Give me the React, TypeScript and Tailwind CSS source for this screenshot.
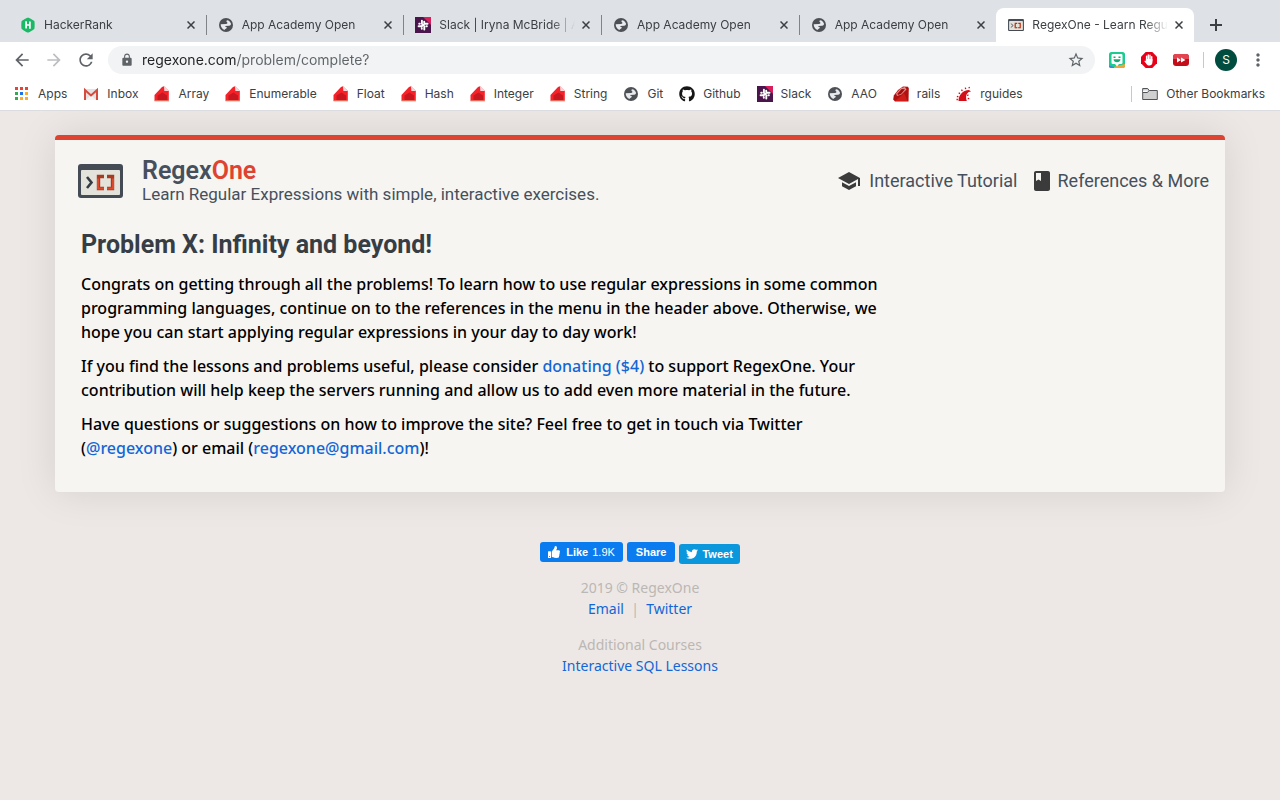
import type { ReactNode } from 'react';
import { FaGithub, FaThumbsUp, FaTwitter } from 'react-icons/fa';
import { MdArrowBack, MdArrowForward, MdClass, MdLock, MdMoreVert, MdRefresh, MdSchool, MdStarBorder } from 'react-icons/md';

function Globe() {
  return (
    <svg viewBox="0 0 16 16" className="size-4 shrink-0" aria-hidden="true">
      <circle cx="8" cy="8" r="7" fill="#4d5156" />
      <path d="M9.500 3.200C8.400 3.600 8 4.400 8.800 5 9.900 5.700 9.500 7 8 7L2.700 7.200C2.600 9.500 4 11.800 6.400 12.900 7 11.800 8.800 11.800 8.800 10.500 8.800 9.600 7 9.800 7 9L11 8.700C12.600 8.500 13.100 7.600 13 6.800 12.600 5.200 11.500 3.800 9.500 3.200Z" fill="#e8eaed" />
    </svg>
  );
}

function HackerRankIcon() {
  return (
    <svg viewBox="0 0 16 16" className="size-4 shrink-0" aria-hidden="true">
      <path d="M8 .4c.7 0 5.800 2.900 6.300 3.600.5.700.5 7.300 0 8-.5.700-5.600 3.600-6.300 3.600S2.200 12.700 1.700 12c-.5-.7-.5-7.300 0-8C2.200 3.300 7.300.4 8 .4Z" fill="#1bb866" />
      <path d="M6.100 4.200v7.200M9.900 4.600v7.200M6.100 8h3.800" stroke="#fff" strokeWidth="1.700" />
    </svg>
  );
}

function SlackIcon() {
  return (
    <svg viewBox="0 0 16 16" className="size-4 shrink-0" aria-hidden="true">
      <path d="M0 0h16v16H0z" fill="#4a154b" />
      <path d="M8 0h8v8Z" fill="#d81e5b" />
      <path d="M6.900 3.600v3.200M9.300 6.700h3.300M9.300 9.300v3.300M3.600 9.300h3.300M9.200 4.600v1M11.400 9.300h.5M6.800 11.300v.5M4.200 6.700h.6M6.500 9.300l3-2.500" stroke="#fff" strokeWidth="1.900" strokeLinecap="round" />
    </svg>
  );
}

function RubyDocIcon() {
  return (
    <svg viewBox="0 0 16 16" className="size-4 shrink-0" aria-hidden="true">
      <path d="M.5 15V9L8 1l2-.8 4.800 4.800V15Z" fill="#f5222a" />
      <path d="M3.500 14V9.500L8.500 6.500l4.500 3V14Z" fill="#c9171f" />
      <path d="M10 .2l.300 4.800h4.700Z" fill="#f8d5d7" />
      <path d="M.5 14.500h14.500v1H.5Z" fill="#d9b48d" />
    </svg>
  );
}

function TerminalIcon({ className }: { className: string }) {
  return (
    <svg viewBox="0 0 45 34" className={className} aria-hidden="true">
      <rect width="45" height="34" rx="3" fill="#444b55" />
      <rect x="3" y="6" width="39" height="25" rx="1" fill="#e4e3db" />
      <path d="M9 13l4.500 5.500L9 24" fill="none" stroke="#343b43" strokeWidth="2.600" />
      <path d="M26 12.500h-5.500v12H26M29 12.500h5.500v12H29" fill="none" stroke="#a93a22" strokeWidth="3.400" />
      <path d="M20 14.500v10h6M35 14.500v10h-6" fill="none" stroke="#dd4a2b" strokeWidth="2" />
    </svg>
  );
}

function AppsIcon() {
  const colors = ['#ea4335', '#ea4335', '#ea4335', '#34a853', '#1a73e8', '#fbac2d', '#34a853', '#fbac2d', '#fbac2d'];
  return (
    <svg viewBox="0 0 16 16" className="size-4 shrink-0" aria-hidden="true">
      {colors.map((c, i) => (
        <rect key={i} x={1 + (i % 3) * 5} y={1 + Math.floor(i / 3) * 5} width="3" height="3" fill={c} />
      ))}
    </svg>
  );
}

function GmailIcon() {
  return (
    <svg viewBox="0 0 16 16" className="size-4 shrink-0" aria-hidden="true">
      <path d="M1 3h14v11H1z" fill="#e3e3e3" />
      <path d="M3 14 8 9l5 5Z" fill="#f5f5f5" />
      <path d="M2 14V4l6 5.500L14 4v10" fill="none" stroke="#d54b3d" strokeWidth="2" />
    </svg>
  );
}

function RubyGemIcon() {
  return (
    <svg viewBox="0 0 16 16" className="size-4 shrink-0" aria-hidden="true">
      <path d="M10 .5 15 .8 15.800 2.500 15.500 15.500 2 15.500.2 13.500.8 9.500 5 4Z" fill="#b01010" />
      <path d="M3 7.500 8 2l4-1 1.500 2.500-5 5L4 10Z" fill="#e58a86" />
      <path d="M4.300 7.700 8.700 3l3.300.2-3.800 4.500L5 9Z" fill="#a00b0b" />
      <path d="M2 15 8 10l3-3 3.500 8Z" fill="#cf1c18" />
    </svg>
  );
}

function RailsIcon() {
  return (
    <svg viewBox="0 0 16 16" className="size-4 shrink-0" aria-hidden="true">
      <path d="M2.500 15c.2-6 4-10.500 10.500-11l2 1.500C11 6 9 9 10.800 15Z" fill="#d30c15" />
      <path d="M.5 13.500h1.400M.9 10.300l1.500.5M2.700 6.800l1.300 1M5.500 3.700l.8 1.300M9.300 1.600l.4 1.500M13 1l.4 1.200M11 9.500l1.500-.6M11.700 12.500l1.600.2" stroke="#d30c15" strokeWidth="1.300" />
    </svg>
  );
}

function FolderIcon() {
  return (
    <svg viewBox="0 0 16 16" className="size-4 shrink-0" aria-hidden="true">
      <path d="M.7 13.500v-11h5l1.500 2h8.100v9Z" fill="#d0d0d0" stroke="#505357" />
      <path d="M1 4.500h5.500l-1 2H1Z" fill="#fff" />
      <path d="M1 6.500h4.500l1.500-2" fill="none" stroke="#505357" />
    </svg>
  );
}

function BitmojiIcon() {
  return (
    <svg viewBox="0 0 16 16" className="size-4" aria-hidden="true">
      <rect width="16" height="16" rx="2.500" fill="#1bcb90" />
      <path d="M6 14.500 16 12v2a2 2 0 0 1-2 2H4Z" fill="#f2a33a" />
      <path d="M0 13.500 5 15v1H2a2 2 0 0 1-2-2Z" fill="#3a86e0" />
      <path d="M3.800 2h8.400A1.300 1.300 0 0 1 13.500 3.300V10.700a1.300 1.300 0 0 1-1.300 1.300H10L8 14.500l-2-2.500H3.800A1.300 1.300 0 0 1 2.500 10.700V3.300A1.300 1.300 0 0 1 3.800 2Z" fill="#fff" />
      <path d="M4.500 5.300h2M9.500 5.300h2" stroke="#1aa777" strokeWidth="1.500" />
      <path d="M4.500 7.200h7c0 4-7 4-7 0Z" fill="#1aa777" />
    </svg>
  );
}

function BlockerIcon() {
  return (
    <svg viewBox="0 0 16 16" className="size-4" aria-hidden="true">
      <path d="M4.700 0h6.600L16 4.700v6.600L11.300 16H4.700L0 11.300V4.700Z" fill="#e60019" />
      <path d="M5.600 9V4.200M7.300 8V2.900M9 8V3.200M10.700 9V4.700" stroke="#fff" strokeWidth="1.400" strokeLinecap="round" />
      <path d="M4.900 7h6.500v3.500C11.400 12.500 10 13.500 8.500 13.500 7 13.500 6.200 13 5.500 12L3.300 9.200c.6-.7 1.200-.5 1.600 0Z" fill="#fff" />
    </svg>
  );
}

function SkipIcon() {
  return (
    <svg viewBox="0 0 16 16" className="size-4" aria-hidden="true">
      <rect y="2" width="16" height="12" rx="3" fill="#c40d1a" />
      <path d="M0 7V5a3 3 0 0 1 3-3h10a3 3 0 0 1 3 3v2Z" fill="#e24550" />
      <path d="M4 5.500 8 8 4 10.500ZM8 5.500 12.500 8 8 10.500Z" fill="#fff" />
    </svg>
  );
}

function Cross() {
  return (
    <svg viewBox="0 0 8 8" className="size-2" aria-hidden="true">
      <path d="M.5.5l7 7M7.500.5l-7 7" stroke="#3c4043" strokeWidth="1.500" />
    </svg>
  );
}

const tabs: { title: string; icon: ReactNode }[] = [
  { title: 'HackerRank', icon: <HackerRankIcon /> },
  { title: 'App Academy Open', icon: <Globe /> },
  { title: 'Slack | Iryna McBride | A', icon: <SlackIcon /> },
  { title: 'App Academy Open', icon: <Globe /> },
  { title: 'App Academy Open', icon: <Globe /> },
  { title: 'RegexOne - Learn Regu', icon: <TerminalIcon className="h-3 w-4 shrink-0" /> },
];

const bookmarks: { title: string; icon: ReactNode }[] = [
  { title: 'Apps', icon: <AppsIcon /> },
  { title: 'Inbox', icon: <GmailIcon /> },
  { title: 'Array', icon: <RubyDocIcon /> },
  { title: 'Enumerable', icon: <RubyDocIcon /> },
  { title: 'Float', icon: <RubyDocIcon /> },
  { title: 'Hash', icon: <RubyDocIcon /> },
  { title: 'Integer', icon: <RubyDocIcon /> },
  { title: 'String', icon: <RubyDocIcon /> },
  { title: 'Git', icon: <Globe /> },
  { title: 'Github', icon: <FaGithub className="size-4 text-[#161614]" /> },
  { title: 'Slack', icon: <SlackIcon /> },
  { title: 'AAO', icon: <Globe /> },
  { title: 'rails', icon: <RubyGemIcon /> },
  { title: 'rguides', icon: <RailsIcon /> },
];

function TabStrip() {
  return (
    <div className="flex h-[42px] items-end bg-[#dee1e6] pl-2">
      <div className="flex h-[34px] max-w-[1186px] flex-1">
        {tabs.map((tab, i) => {
          const active = i === tabs.length - 1;
          const separated = i < tabs.length - 2;
          return (
            <div key={i} className={`flex min-w-0 flex-1 items-center rounded-t-lg pl-3 ${active ? 'bg-white' : ''}`}>
              {tab.icon}
              <button className="ml-2 min-w-0 flex-1 overflow-hidden text-left whitespace-nowrap [mask-image:linear-gradient(to_right,black_112px,transparent_136px)]">
                {tab.title}
              </button>
              <button aria-label="Close tab" className="mr-[11px] ml-1 p-0">
                <Cross />
              </button>
              <span className={`-mr-px h-5 w-px ${separated ? 'bg-[#808488]' : ''}`} />
            </div>
          );
        })}
      </div>
      <button aria-label="New tab" className="mr-auto mb-[11px] ml-4">
        <svg viewBox="0 0 12 12" className="size-3" aria-hidden="true">
          <path d="M6 0v12M0 6h12" stroke="#3c4043" strokeWidth="2" />
        </svg>
      </button>
    </div>
  );
}

function Toolbar() {
  return (
    <div className="flex h-9 items-center pr-3 pl-3">
      <button aria-label="Back" className="text-[#5f6368]"><MdArrowBack className="size-5" /></button>
      <button aria-label="Forward" className="ml-3 text-[#bcbec1]"><MdArrowForward className="size-5" /></button>
      <button aria-label="Reload" className="ml-3 text-[#5f6368]"><MdRefresh className="size-5" /></button>
      <div className="ml-3 flex h-7 flex-1 items-center rounded-full bg-[#f1f3f4] pr-2.5 pl-3">
        <MdLock className="size-3.5 text-[#5f6368]" />
        <input
          aria-label="Address"
          defaultValue="regexone.com/problem/complete?"
          className="ml-2 min-w-0 flex-1 bg-transparent bg-[linear-gradient(to_right,#202124_94px,#5f6368_94px)] bg-clip-text text-sm leading-6 text-transparent outline-none"
        />
        <button aria-label="Bookmark this page" className="text-[#5f6368]"><MdStarBorder className="size-4.5" /></button>
      </div>
      <div className="ml-3.5 flex items-center gap-4">
        <button aria-label="Bitmoji"><BitmojiIcon /></button>
        <button aria-label="Ad blocker"><BlockerIcon /></button>
        <button aria-label="Skip ads"><SkipIcon /></button>
      </div>
      <span className="ml-3.5 h-4 w-px bg-[#c6c8cb]" />
      <button aria-label="Profile" className="ml-[11px] size-[22px] rounded-full bg-[#004d40] text-xs text-white">S</button>
      <button aria-label="Menu" className="ml-[11px] text-[#5f6368]"><MdMoreVert className="size-5" /></button>
    </div>
  );
}

function BookmarksBar() {
  return (
    <nav aria-label="Bookmarks" className="flex h-[33px] items-center border-b border-[#dadce0] pr-[15px] pl-3.5">
      <div className="flex items-center gap-4">
        {bookmarks.map((b) => (
          <a key={b.title} href="#" className="flex items-center gap-2">
            {b.icon}
            {b.title}
          </a>
        ))}
      </div>
      <span className="ml-auto h-4 w-px bg-[#c6c8cb]" />
      <a href="#" className="ml-2.5 flex items-center gap-2">
        <FolderIcon />
        Other Bookmarks
      </a>
    </nav>
  );
}

function SiteHeader() {
  return (
    <header className="flex items-center pt-[18px] pr-4 pl-[23px] font-['Roboto',sans-serif] font-normal text-[#46505c]">
      <TerminalIcon className="h-[34px] w-[45px]" />
      <div className="ml-[19px]">
        <div className="text-[25px] leading-[26px] font-semibold">
          Regex<span className="text-[#dd4330]">One</span>
        </div>
        <div className="text-[17px] leading-5">Learn Regular Expressions with simple, interactive exercises.</div>
      </div>
      <nav aria-label="Site" className="ml-auto flex gap-3 text-lg leading-6">
        <a href="#" className="flex items-center gap-2">
          <MdSchool className="size-6 text-[#3b3b3b]" />
          Interactive Tutorial
        </a>
        <a href="#" className="flex items-center gap-1">
          <MdClass className="size-6 text-[#3b3b3b]" />
          References &amp; More
        </a>
      </nav>
    </header>
  );
}

function Link({ children }: { children: ReactNode }) {
  return <a href="#" className="text-[#1266d6]">{children}</a>;
}

export default function App() {
  return (
    <div className="flex min-h-screen flex-col bg-[#ede8e5] font-['Noto_Sans',sans-serif]">
      <div className="bg-white font-['Inter',sans-serif] text-xs text-[#3c4043]">
        <TabStrip />
        <Toolbar />
        <BookmarksBar />
      </div>

      <div className="flex-1 overflow-hidden px-4 pt-6 pb-8">
        <main className="mx-auto max-w-[1170px] rounded-sm border-t-5 border-[#dd4330] bg-[#f6f5f1] pb-8 shadow-[0_0_40px_rgba(0,0,0,0.1)]">
          <SiteHeader />
          <section className="pt-[25px] pl-[26px]">
            <h1 className="font-['Roboto',sans-serif] text-[25px] leading-8 font-bold text-[#373d45]">Problem X: Infinity and beyond!</h1>
            <div className="mt-[11px] flex flex-col gap-2.5 text-base leading-6 font-medium text-black">
              <p>
                Congrats on getting through all the problems! To learn how to use regular expressions in some common<br />
                programming languages, continue on to the references in the menu in the header above. Otherwise, we<br />
                hope you can start applying regular expressions in your day to day work!
              </p>
              <p>
                If you find the lessons and problems useful, please consider <Link>donating ($4)</Link> to support RegexOne. Your<br />
                contribution will help keep the servers running and allow us to add even more material in the future.
              </p>
              <p>
                Have questions or suggestions on how to improve the site? Feel free to get in touch via Twitter<br />
                (<Link>@regexone</Link>) or email (<Link>regexone@gmail.com</Link>)!
              </p>
            </div>
          </section>
        </main>

        <footer className="mt-[50px] flex flex-col items-center text-sm leading-[21px] text-[#bbb7b4]">
          <div className="flex items-start gap-1 font-['Liberation_Sans',sans-serif] text-[11px] font-bold text-white">
            <button className="flex h-5 items-center rounded-[3px] bg-[#0a7cf0] px-2">
              <FaThumbsUp className="mr-1.5 size-3" />
              Like <span className="ml-1 font-normal">1.9K</span>
            </button>
            <button className="h-5 rounded-[3px] bg-[#0a7cf0] px-[9px]">Share</button>
            <button className="mt-0.5 flex h-5 items-center gap-1 rounded-[3px] bg-[#0a97dc] px-[7px]">
              <FaTwitter className="size-3" />
              Tweet
            </button>
          </div>
          <div className="mt-[13px] text-center">
            <p>2019 © RegexOne</p>
            <p><Link>Email</Link>&nbsp; | &nbsp;<Link>Twitter</Link></p>
          </div>
          <div className="mt-[15px] text-center">
            <p>Additional Courses</p>
            <p><Link>Interactive SQL Lessons</Link></p>
          </div>
        </footer>
      </div>
    </div>
  );
}
